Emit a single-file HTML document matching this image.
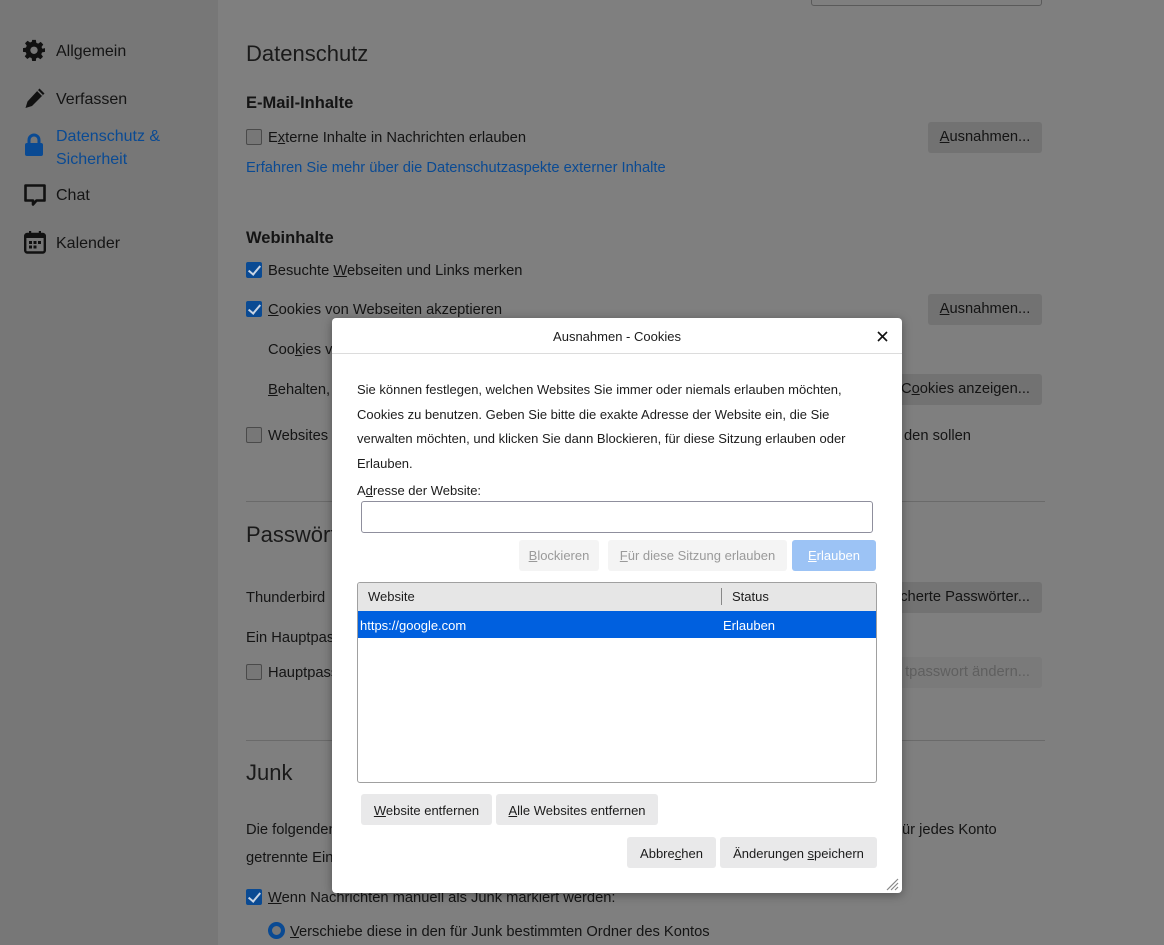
<!DOCTYPE html>
<html><head><meta charset="utf-8">
<style>
*{margin:0;padding:0;box-sizing:border-box}
body{width:1164px;height:945px;overflow:hidden;background:#7f7f7f;font-family:"Liberation Sans",sans-serif;color:#141414;position:relative}
.a{position:absolute;white-space:nowrap}
.t{font-size:14.7px;line-height:20px}
#side{position:absolute;left:0;top:0;width:218px;height:945px;background:#777}
.nav{position:absolute;left:56px;font-size:16px;line-height:22px}
.h1{font-size:22px;font-weight:300;line-height:28px;color:#1a1a1a}
.h2{font-size:16.5px;font-weight:bold;line-height:22px}
.cb{position:absolute;width:16px;height:16px;border:1px solid #4a4a4a;border-radius:2px;background:#777}
.cb.on{background:#0a4a93;border-color:#0a4a93}
.cb.on:after{content:"";position:absolute;left:4px;top:0px;width:5px;height:10px;border:solid #c8d4e4;border-width:0 2px 2px 0;transform:rotate(40deg)}
.bb{position:absolute;background:#727272;border-radius:3px;font-size:14.7px;line-height:31px;text-align:center;height:31px}
.hr{position:absolute;left:246px;width:799px;height:1px;background:#6a6a6a}
#dlg{position:absolute;left:332px;top:318px;width:570px;height:575px;background:#fff;border-radius:4px;box-shadow:0 2px 10px rgba(0,0,0,.35);font-size:13px;color:#1c1c1c}
.d{position:absolute;white-space:nowrap;font-size:13px}
.btn{position:absolute;height:31px;line-height:31px;background:#e9e9ea;border-radius:3px;text-align:center;font-size:13px;color:#1c1c1c}
u{text-decoration:underline}
</style></head><body>
<div id="side"></div>
<div class="a" style="left:811px;top:-6px;width:231px;height:12px;border:1px solid #5a5a5a;border-radius:3px"></div>

<!-- sidebar -->
<svg class="a" style="left:23px;top:39px" width="22" height="22" viewBox="0 0 24 24"><path fill="#111" d="M10 1h4l.6 3.2 2 .9 2.7-1.9 2.8 2.8-1.9 2.7.9 2L24 10v4l-3.2.6-.9 2 1.9 2.7-2.8 2.8-2.7-1.9-2 .9L14 24h-4l-.6-3.2-2-.9-2.7 1.9-2.8-2.8 1.9-2.7-.9-2L0 14v-4l3.2-.6.9-2-1.9-2.7 2.8-2.8 2.7 1.9 2-.9z"/><circle cx="12" cy="12.3" r="4" fill="#777"/></svg>
<div class="nav" style="top:41px">Allgemein</div>
<svg class="a" style="left:24px;top:87px" width="22" height="22" viewBox="0 0 22 22"><path fill="#111" d="M15.5 1.5l5 5L8 19l-6.5 2 2-6.5z"/><path stroke="#777" stroke-width="1.3" d="M13.5 3.5l5 5"/></svg>
<div class="nav" style="top:89px">Verfassen</div>
<svg class="a" style="left:24px;top:133px" width="20" height="24" viewBox="0 0 20 24"><path d="M5 11V7a5 5 0 0110 0v4" fill="none" stroke="#0a4a93" stroke-width="3"/><rect x="1" y="10" width="18" height="13" rx="2" fill="#0a4a93"/></svg>
<div class="nav" style="top:125px;color:#0a4a93;line-height:23px">Datenschutz &amp;<br>Sicherheit</div>
<svg class="a" style="left:23px;top:183px" width="24" height="24" viewBox="0 0 24 24"><path d="M2.5 2.5h19v15h-8l-3.5 4v-4h-7.5z" fill="none" stroke="#111" stroke-width="2.6" stroke-linejoin="round"/></svg>
<div class="nav" style="top:185px">Chat</div>
<svg class="a" style="left:24px;top:230px" width="22" height="24" viewBox="0 0 22 24"><rect x="1.2" y="4" width="19.6" height="18.5" rx="2" fill="none" stroke="#111" stroke-width="2.4"/><rect x="1" y="4" width="20" height="4" fill="#111"/><rect x="5" y="1" width="2.2" height="5" fill="#111"/><rect x="14.8" y="1" width="2.2" height="5" fill="#111"/><g fill="#111"><rect x="5" y="11" width="3" height="3"/><rect x="9.5" y="11" width="3" height="3"/><rect x="14" y="11" width="3" height="3"/><rect x="5" y="15.5" width="3" height="3"/><rect x="9.5" y="15.5" width="3" height="3"/></g></svg>
<div class="nav" style="top:233px">Kalender</div>

<!-- main -->
<div class="a h1" style="left:246px;top:40px">Datenschutz</div>
<div class="a h2" style="left:246px;top:92px">E-Mail-Inhalte</div>
<div class="cb" style="left:246px;top:129px"></div>
<div class="a t" style="left:268px;top:128px">E<u>x</u>terne Inhalte in Nachrichten erlauben</div>
<div class="bb" style="left:928px;top:122px;width:114px"><u>A</u>usnahmen...</div>
<div class="a t" style="left:246px;top:158px;color:#0a4a93">Erfahren Sie mehr über die Datenschutzaspekte externer Inhalte</div>
<div class="a h2" style="left:246px;top:227px">Webinhalte</div>
<div class="cb on" style="left:246px;top:262px"></div>
<div class="a t" style="left:268px;top:261px">Besuchte <u>W</u>ebseiten und Links merken</div>
<div class="cb on" style="left:246px;top:301px"></div>
<div class="a t" style="left:268px;top:300px"><u>C</u>ookies von Webseiten akzeptieren</div>
<div class="bb" style="left:928px;top:294px;width:114px"><u>A</u>usnahmen...</div>
<div class="a t" style="left:268px;top:340px">Coo<u>k</u>ies von Drittanbietern akzeptieren</div>
<div class="a t" style="left:268px;top:380px"><u>B</u>ehalten, bis</div>
<div class="bb" style="left:880px;top:374px;width:162px;text-align:right;padding-right:12px">C<u>o</u>okies anzeigen...</div>
<div class="cb" style="left:246px;top:427px"></div>
<div class="a t" style="left:268px;top:426px">Websites</div>
<div class="a t" style="left:904px;top:426px">den sollen</div>
<div class="hr" style="top:501px"></div>
<div class="a h1" style="left:246px;top:521px">Passwörter</div>
<div class="a t" style="left:246px;top:588px">Thunderbird</div>
<div class="bb" style="left:880px;top:582px;width:162px;text-align:right;padding-right:12px">cherte Passwörter...</div>
<div class="a t" style="left:246px;top:628px">Ein Hauptpasswort</div>
<div class="cb" style="left:246px;top:664px"></div>
<div class="a t" style="left:268px;top:663px">Hauptpasswort</div>
<div class="bb" style="left:880px;top:657px;width:162px;text-align:right;padding-right:12px;background:#7a7a7a;color:#5f5f5f">tpasswort ändern...</div>
<div class="hr" style="top:740px"></div>
<div class="a h1" style="left:246px;top:759px">Junk</div>
<div class="a t" style="left:246px;top:820px">Die folgenden</div>
<div class="a t" style="left:902px;top:820px">ür jedes Konto</div>
<div class="a t" style="left:246px;top:848px">getrennte Einstellungen</div>
<div class="cb on" style="left:246px;top:889px"></div>
<div class="a t" style="left:268px;top:888px"><u>W</u>enn Nachrichten manuell als Junk markiert werden:</div>
<div class="a" style="left:268px;top:922px;width:17px;height:17px;border-radius:50%;border:4.5px solid #0a4a93;background:#777"></div>
<div class="a t" style="left:290px;top:922px"><u>V</u>erschiebe diese in den für Junk bestimmten Ordner des Kontos</div>

<!-- dialog -->
<div id="dlg">
<div class="d" style="left:0;width:570px;text-align:center;top:11px">Ausnahmen - Cookies</div>
<svg class="a" style="left:545px;top:13px" width="11" height="11" viewBox="0 0 11 11"><path d="M1 1l9 9M10 1l-9 9" stroke="#111" stroke-width="1.6"/></svg>
<div class="a" style="left:0;top:35px;width:570px;height:1px;background:#dcdcdc"></div>
<div class="d" style="left:25px;top:60px;line-height:24.5px">Sie können festlegen, welchen Websites Sie immer oder niemals erlauben möchten,<br>Cookies zu benutzen. Geben Sie bitte die exakte Adresse der Website ein, die Sie<br>verwalten möchten, und klicken Sie dann Blockieren, für diese Sitzung erlauben oder<br>Erlauben.</div>
<div class="d" style="left:25px;top:165px">A<u>d</u>resse der Website:</div>
<div class="a" style="left:29px;top:183px;width:512px;height:32px;border:1px solid #8f8f9d;border-radius:3px"></div>
<div class="btn" style="left:187px;top:222px;width:80px;color:#9a9a9a;background:#f4f4f4"><u>B</u>lockieren</div>
<div class="btn" style="left:276px;top:222px;width:179px;color:#9a9a9a;background:#f4f4f4"><u>F</u>ür diese Sitzung erlauben</div>
<div class="btn" style="left:460px;top:222px;width:84px;color:#fff;background:#9cc3f5"><u>E</u>rlauben</div>
<div class="a" style="left:25px;top:264px;width:520px;height:201px;border:1px solid #a0a0a0;border-radius:3px;overflow:hidden">
 <div class="a" style="left:0;top:0;width:520px;height:28px;background:#e6e6e6"></div>
 <div class="d" style="left:10px;top:6px">Website</div>
 <div class="a" style="left:363px;top:5px;width:1px;height:17px;background:#888"></div>
 <div class="d" style="left:374px;top:6px">Status</div>
 <div class="a" style="left:0;top:28px;width:520px;height:27px;background:#0060df"></div>
 <div class="d" style="left:2px;top:35px;color:#fff">https://google.com</div>
 <div class="d" style="left:365px;top:35px;color:#fff">Erlauben</div>
</div>
<div class="btn" style="left:29px;top:476px;width:131px;line-height:33px"><u>W</u>ebsite entfernen</div>
<div class="btn" style="left:164px;top:476px;width:162px;line-height:33px"><u>A</u>lle Websites entfernen</div>
<div class="btn" style="left:295px;top:519px;width:89px;line-height:33px">Abbre<u>c</u>hen</div>
<div class="btn" style="left:388px;top:519px;width:157px;line-height:33px">Änderungen <u>s</u>peichern</div>
<svg class="a" style="left:553px;top:559px" width="14" height="14" viewBox="0 0 14 14"><path d="M13 2L2 13M13 6L6 13M13 10l-3 3" stroke="#888" stroke-width="1.2"/></svg>
</div>
</body></html>
